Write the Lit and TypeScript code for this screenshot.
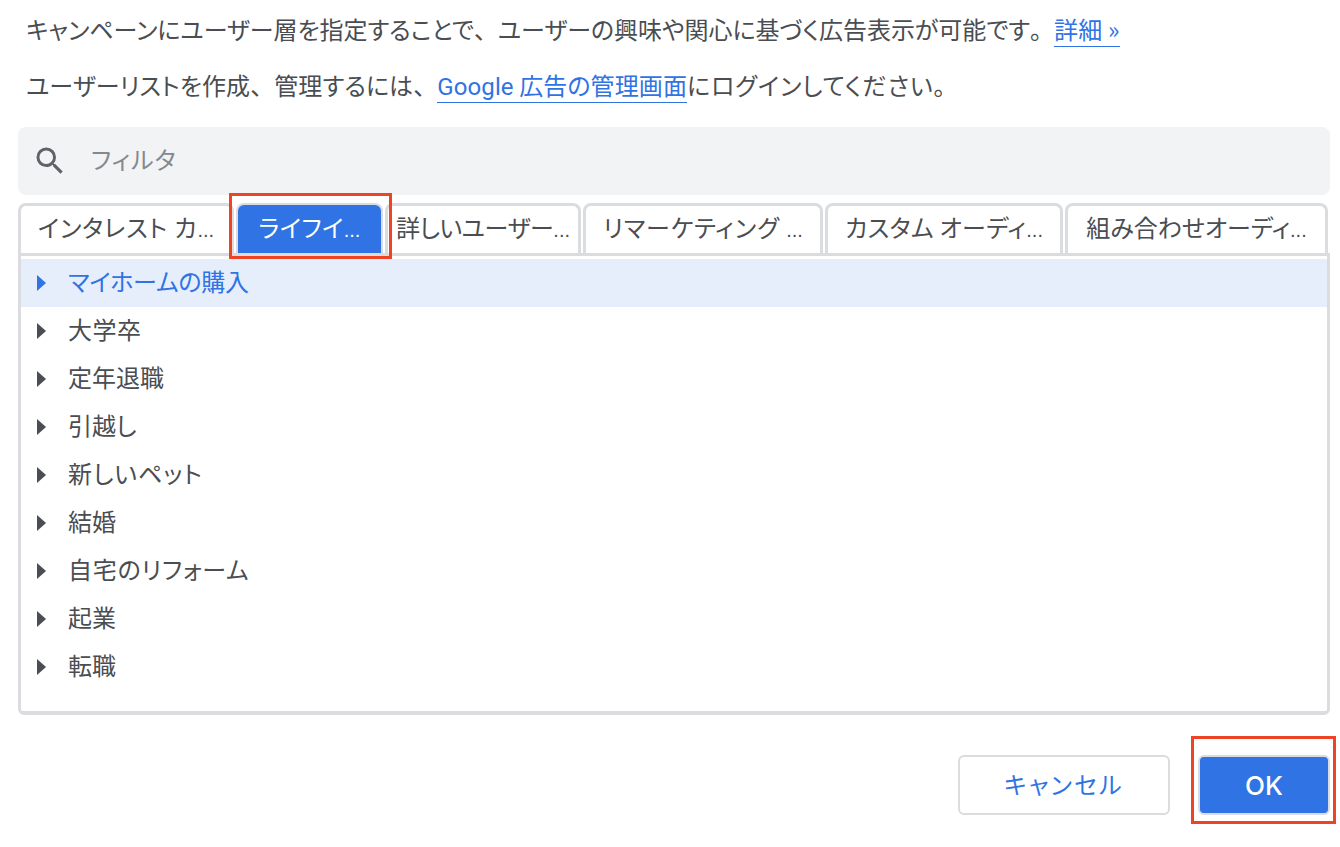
import { LitElement, html, css } from "lit";
import { customElement } from "lit/decorators.js";

const TABS = [
  { label: "インタレスト カ", w: 216, ls: 0.9 },
  { label: "ライフイ", w: 147, ls: 0.5, active: true },
  { label: "詳しいユーザー", w: 196, ls: -0.4 },
  { label: "リマーケティング ", w: 240, ls: 1 },
  { label: "カスタム オーディ", w: 238, ls: 0.4 },
  { label: "組み合わせオーディ", w: 263, ls: 0 },
];
const ROWS = [
  { t: "マイホームの購入", ls: -0.2 },
  { t: "大学卒", ls: 0.5 },
  { t: "定年退職", ls: 0 },
  { t: "引越し", ls: 0 },
  { t: "新しいペット", ls: 1 },
  { t: "結婚", ls: 0 },
  { t: "自宅のリフォーム", ls: 0.8 },
  { t: "起業", ls: 0 },
  { t: "転職", ls: 0 },
];

@customElement("app-root")
export class AppRoot extends LitElement {
  static styles = css`
    :host {
      display: block;
      position: relative;
      width: 1340px;
      height: 847px;
      overflow: hidden;
      background: #fff;
      color: #4a4d51;
      font-family: "Noto Sans CJK JP", "Liberation Sans", sans-serif;
      font-size: 24px;
      font-feature-settings: "palt";
    }
    .page { display: flex; flex-direction: column; padding: 0 10px 0 18px; }
    p { margin: 0; padding-left: 8px; line-height: 32px; height: 32px; white-space: nowrap; }
    .p1 { padding-top: 13px; letter-spacing: -0.04px; }
    .p1 a { letter-spacing: 0.2px; }
    .p2 { padding-top: 24px; letter-spacing: 0.1px; }
    .fw { font-feature-settings: normal; }
    .tail { letter-spacing: 0.9px; }
    a { color: #2f73e4; text-decoration: none; border-bottom: 1.5px solid #2f73e4; }
    .g { font-family: Roboto, "Noto Sans CJK JP", sans-serif; }
    .filter {
      margin-top: 26px; height: 68px; border-radius: 8px; background: #f1f3f4;
      display: flex; align-items: center; padding-left: 14px; gap: 23px;
      color: #85888c; letter-spacing: 1px;
    }
    .filter svg { display: block; }
    .filter span { padding-bottom: 6px; }
    .tabs { display: flex; margin-top: 8px; height: 50px; gap: 2px; align-items: stretch; }
    .tab {
      box-sizing: border-box; border: 3px solid #dadce0; border-bottom: 0;
      border-radius: 8px 8px 0 0; display: flex; align-items: center; justify-content: center;
      white-space: pre; padding-bottom: 6px; color: #4a4d51;
    }
    .tab.active { background: #2f73e4; color: #fff; border-width: 2px 2px 0; }
    .e { font-family: "Liberation Sans", sans-serif; font-size: 20px; letter-spacing: 0; align-self: flex-end; padding-bottom: 7px; line-height: 20px; }
    .panel {
      box-sizing: border-box; height: 462px; border: 3px solid #dadce0; border-bottom-width: 4px; border-radius: 0 0 6px 6px;
      padding-top: 3px; width: 1312px;
    }
    .row { height: 48px; display: flex; align-items: center; padding-left: 16px; gap: 22px; }
    .row.first { background: #e6eefb; color: #2f73e4; }
    .row svg { display: block; fill: currentColor; flex: none; }
    .row span { padding-bottom: 6px; }
    .actions { display: flex; justify-content: flex-end; align-items: center; margin-top: 40px; }
    .btn {
      box-sizing: border-box; display: flex; align-items: center; justify-content: center;
      height: 60px; border-radius: 6px; border: 2px solid #dadce0;
    }
    .cancel { width: 212px; color: #2f73e4; background: #fff; padding-bottom: 4px; letter-spacing: 2.2px; }
    .ok {
      width: 132px; margin-left: 28px; background: #2f73e4; color: #fff;
      font-family: Inter, Roboto, sans-serif; font-size: 26px; font-weight: 500;
    }
    .mark { position: absolute; box-sizing: border-box; border: 3px solid #ee4426; pointer-events: none; }
    .m1 { left: 229px; top: 193px; width: 163px; height: 66px; }
    .m2 { left: 1191px; top: 736px; width: 145px; height: 88px; }
  `;

  render() {
    return html`
      <div class="page">
        <p class="p1">キャンペーンにユーザー層を指定することで<span class="fw">、</span>ユーザーの興味や関心に基づく広告表示が可能です<span class="fw">。</span><a href="#">詳細 »</a></p>
        <p class="p2">ユーザーリストを作成<span class="fw">、</span>管理するには<span class="fw">、</span><a href="#"><span class="g">Google</span> 広告の管理画面</a><span class="tail">にログインしてください。</span></p>
        <div class="filter">
          <svg width="36" height="36" viewBox="0 0 24 24" fill="#5f6368"><path d="M15.5 14h-.79l-.28-.27A6.47 6.47 0 0 0 16 9.5 6.5 6.5 0 1 0 9.5 16c1.61 0 3.09-.59 4.23-1.57l.27.28v.79l5 4.99L20.49 19l-4.99-5zm-6 0C7.01 14 5 11.99 5 9.5S7.01 5 9.5 5 14 7.01 14 9.5 11.99 14 9.5 14z"/></svg>
          <span>フィルタ</span>
        </div>
        <div class="tabs">
          ${TABS.map(
            (t) => html`<div class="tab ${t.active ? "active" : ""}" style="width:${t.w}px;letter-spacing:${t.ls}px">${t.label}<span class="e">...</span></div>`
          )}
        </div>
        <div class="panel">
          ${ROWS.map(
            (r, i) => html`<div class="row ${i === 0 ? "first" : ""}">
              <svg width="9" height="16" viewBox="0 0 9 16"><path d="M0 0l9 8-9 8z"/></svg>
              <span style="letter-spacing:${r.ls}px">${r.t}</span>
            </div>`
          )}
        </div>
        <div class="actions">
          <div class="btn cancel">キャンセル</div>
          <div class="btn ok">OK</div>
        </div>
      </div>
      <div class="mark m1"></div>
      <div class="mark m2"></div>
    `;
  }
}
